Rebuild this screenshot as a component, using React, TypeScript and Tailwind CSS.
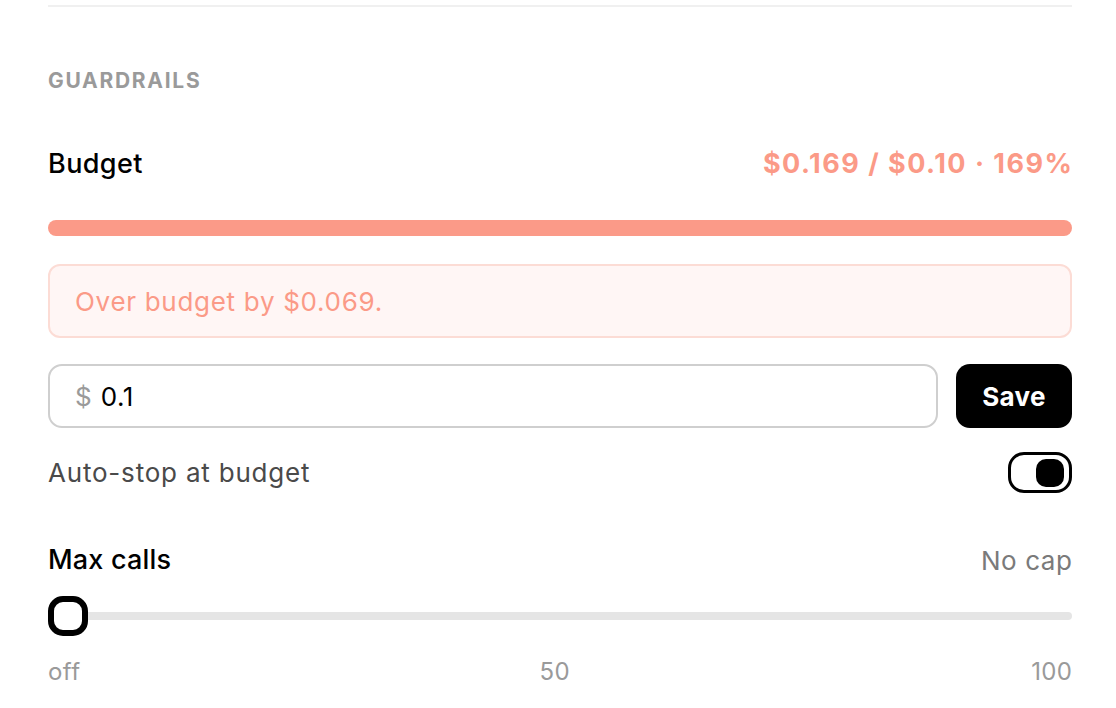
import React from "react";

export default function App() {
  return (
    <div
      className="w-[1116px] h-[708px] bg-white pl-12 pr-[44px] pt-[5px] overflow-hidden"
      style={{ fontFamily: "Inter, 'Noto Sans', sans-serif" }}
    >
      <div className="h-[2px] bg-[#f0f0f0]" />

      <div className="mt-[58px] h-[32px] leading-[32px] text-[21px] font-bold tracking-[1.7px] text-[#9a9a9a]">
        GUARDRAILS
      </div>

      <div className="mt-[48px] h-[39px] flex items-center justify-between">
        <span className="text-[27px] font-medium tracking-[0.4px] text-black">Budget</span>
        <span className="-mr-[1.5px] text-[27px] font-bold tracking-[1.5px] text-[#fb9a87]">$0.169 / $0.10 · 169%</span>
      </div>

      <div className="mt-[36px] h-[16px] rounded-full bg-[#fb9a88]" />

      <div className="mt-[28px] h-[74px] rounded-[12px] border-2 border-[#fcdcd5] bg-[#fff6f5] pl-[25px] flex items-center">
        <span className="text-[26px] tracking-[0.7px] text-[#fb9a87]">Over budget by $0.069.</span>
      </div>

      <div className="mt-[26px] h-[64px] flex gap-[18px]">
        <div className="flex-1 rounded-[14px] border-2 border-[#cfcfcf] flex items-center pl-[25px]">
          <span className="text-[26px] text-[#9a9a9a]">$</span>
          <span className="ml-[9px] text-[26px] tracking-[0.5px] text-black">0.1</span>
        </div>
        <button className="w-[116px] rounded-[14px] bg-black text-white text-[26px] font-bold tracking-[0.3px]">
          Save
        </button>
      </div>

      <div className="mt-[24px] h-[41px] flex items-center justify-between">
        <span className="text-[26px] tracking-[0.8px] text-[#4a4a4a]">Auto-stop at budget</span>
        <div className="w-[64px] h-[41px] rounded-[16px] border-[3px] border-black flex items-center justify-end pr-[5px]">
          <div className="w-[28px] h-[28px] rounded-[10px] bg-black" />
        </div>
      </div>

      <div className="mt-[47px] h-[40px] flex items-center justify-between">
        <span className="text-[27px] font-medium tracking-[0.2px] text-black">Max calls</span>
        <span className="-mr-[0.6px] text-[26px] tracking-[0.6px] text-[#7a7a7a]">No cap</span>
      </div>

      <div className="mt-[16px] h-[40px] relative flex items-center">
        <div className="w-full h-[8px] rounded-full bg-[#e5e5e5]" />
        <div className="absolute left-0 top-0 w-[40px] h-[40px] rounded-[15px] border-[6px] border-black bg-white" />
      </div>

      <div className="mt-[20px] h-[32px] flex items-center justify-between text-[24px] tracking-[0.4px] text-[#9a9a9a]">
        <span>off</span>
        <span className="-ml-[2px]">50</span>
        <span className="-mr-[0.4px]">100</span>
      </div>
    </div>
  );
}
